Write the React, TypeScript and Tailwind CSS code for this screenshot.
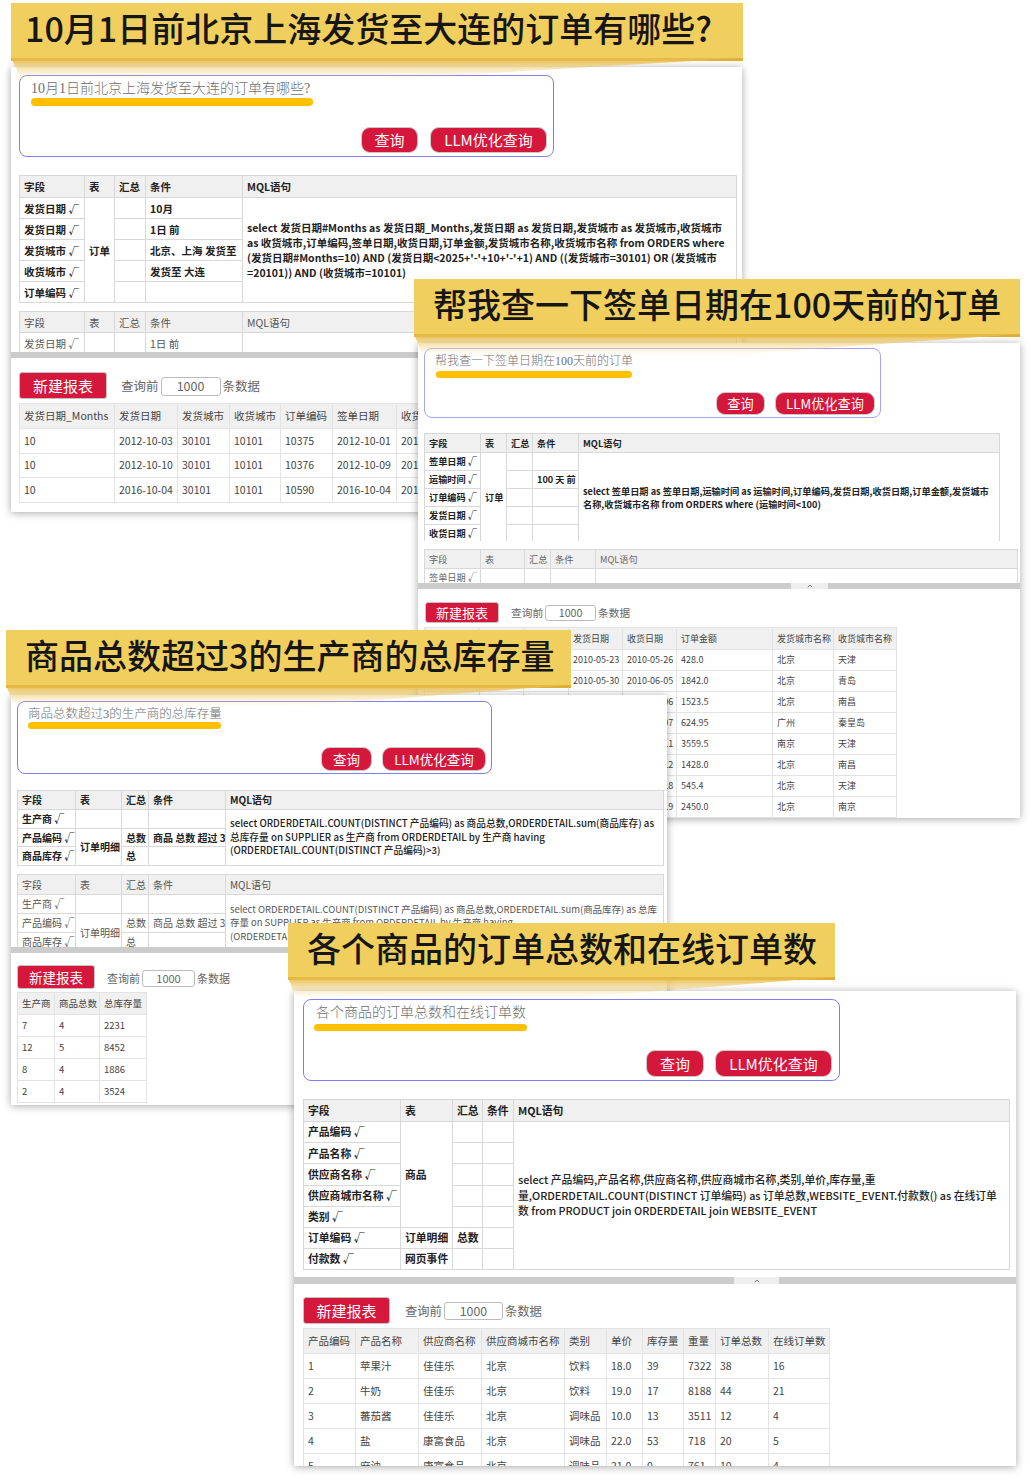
import { useId } from 'react';
import type { ReactNode } from 'react';
import { ChevronUp } from 'lucide-react';

type Cell = string | { t: string; span: number } | null;

interface GridTableProps {
  cols: string[];
  head: string[];
  rows: Cell[][];
  width: string;
  headH: string;
  rowH: string;
  text: string;
  wrapLast?: boolean;
  wrapText?: string;
  margin?: string;
  result?: boolean;
}

// one table, also used for the result grids at the bottom of each window
function GridTable({ cols, head, rows, width, headH, rowH, text, wrapLast, wrapText, margin, result }: GridTableProps) {
  const line = result ? 'border border-[#e3e3e3]' : 'border border-[#d8d8d8]';
  return (
    <table className={`table-fixed border-collapse shrink-0 ${width} ${text} ${margin ?? ''}`}>
      <colgroup>
        {cols.map((c, i) => (
          <col key={i} className={c} />
        ))}
      </colgroup>
      <thead>
        <tr className={`${headH} bg-[#f0f0f0]`}>
          {head.map((h, i) => (
            <th key={i} className={`${line} px-[4px] py-0 text-left [font-weight:inherit] whitespace-nowrap overflow-hidden`}>
              {h}
            </th>
          ))}
        </tr>
      </thead>
      <tbody>
        {rows.map((row, r) => (
          <tr key={r} className={rowH}>
            {row.map((cell, i) => {
              if (cell === null) return null;
              const span = typeof cell === 'string' ? 1 : cell.span;
              const label = typeof cell === 'string' ? cell : cell.t;
              const wrap = wrapLast && i === row.length - 1;
              return (
                <td
                  key={i}
                  rowSpan={span}
                  className={`${line} px-[4px] py-0 overflow-hidden ${wrap ? wrapText ?? '' : 'whitespace-nowrap'}`}
                >
                  {label}
                </td>
              );
            })}
          </tr>
        ))}
      </tbody>
    </table>
  );
}

interface BannerProps {
  box: string;
  children: ReactNode;
}

function Banner({ box, children }: BannerProps) {
  const id = useId();
  return (
    <div className={`absolute ${box} bg-[#f0cf5e] border-b-[3px] border-[#dcae36] flex items-center pb-[5px]`}>
      <span className="text-[34px] leading-none font-medium text-[#161616] whitespace-nowrap">{children}</span>
      <svg className="absolute left-0 top-full w-full h-[24px]" viewBox="0 0 100 24" preserveAspectRatio="none">
        <defs>
          <linearGradient id={id} x1="0" y1="0" x2="0" y2="1">
            <stop offset="0" stopColor="#e6b843" stopOpacity="1" />
            <stop offset="0.9" stopColor="#f6e09a" stopOpacity="0" />
          </linearGradient>
        </defs>
        <polygon points="0,0 1.2,18 45,24 100,0" fill={`url(#${id})`} />
      </svg>
    </div>
  );
}

interface QueryBoxProps {
  box: string;
  label: string;
  labelClass: string;
  bar: string;
  btnRow: string;
  btnA: string;
  btnB: string;
}

function QueryBox({ box, label, labelClass, bar, btnRow, btnA, btnB }: QueryBoxProps) {
  const btn = 'flex items-center justify-center rounded-[9px] bg-[#d5173c] border border-[#c9c9c9] text-white';
  return (
    <div className={`${box} shrink-0 flex flex-col border rounded-[8px] bg-white`}>
      <div className={`${labelClass} font-['Liberation_Serif','Noto_Sans_CJK_SC',serif] font-light text-[#6f6f6f] whitespace-nowrap`}>
        {label}
      </div>
      <div className={`${bar} rounded-full bg-[#ffc000]`} />
      <div className={`mt-auto flex justify-end ${btnRow}`}>
        <div className={`${btn} ${btnA}`}>查询</div>
        <div className={`${btn} ${btnB}`}>LLM优化查询</div>
      </div>
    </div>
  );
}

interface ToolbarProps {
  pad: string;
  btn: string;
  group: string;
  input: string;
}

function Toolbar({ pad, btn, group, input }: ToolbarProps) {
  return (
    <div className={`flex items-start ${pad}`}>
      <div className={`${btn} flex items-center justify-center rounded-[3px] bg-[#d5173c] border border-[#c2c2c2] text-white`}>
        新建报表
      </div>
      <div className={`flex items-center text-[#666] ${group}`}>
        <span>查询前</span>
        <div className={`${input} mx-[2px] flex items-center justify-center bg-white border border-[#bbb] rounded-[3px] text-[#666]`}>
          1000
        </div>
        <span>条数据</span>
      </div>
    </div>
  );
}

function Divider({ height, handle }: { height: string; handle?: string }) {
  return (
    <div className={`${height} shrink-0 bg-[#cccccc] flex`}>
      {handle && (
        <div className={`${handle} h-full bg-[#eeeeee] flex items-center justify-center`}>
          <ChevronUp size={8} strokeWidth={3} className="text-[#777]" />
        </div>
      )}
    </div>
  );
}

const HEAD = ['字段', '表', '汇总', '条件', 'MQL语句'];

const A_COLS = ['w-[65px]', 'w-[30px]', 'w-[31px]', 'w-[97px]', 'w-[494px]'];
const B_COLS = ['w-[56px]', 'w-[26px]', 'w-[26px]', 'w-[46px]', 'w-[421px]'];
const B_COLS2 = ['w-[56px]', 'w-[44px]', 'w-[26px]', 'w-[45px]', 'w-[422px]'];
const C_COLS = ['w-[58px]', 'w-[46px]', 'w-[27px]', 'w-[77px]', 'w-[438px]'];
const D_COLS = ['w-[97px]', 'w-[52px]', 'w-[30px]', 'w-[31px]', 'w-[496px]'];

const C_SQL =
  'select ORDERDETAIL.COUNT(DISTINCT 产品编码) as 商品总数,ORDERDETAIL.sum(商品库存) as 总库存量 on SUPPLIER as 生产商 from ORDERDETAIL by 生产商 having (ORDERDETAIL.COUNT(DISTINCT 产品编码)>3)';

const C_ROWS: Cell[][] = [
  ['生产商 √', { t: '', span: 1 }, '', '', { t: C_SQL, span: 3 }],
  ['产品编码 √', { t: '订单明细', span: 2 }, '总数', '商品 总数 超过 3', null],
  ['商品库存 √', null, '总', '', null],
];

export default function App() {
  return (
    <div className="relative w-[1030px] h-[1477px] overflow-hidden bg-white font-['Noto_Sans_CJK_SC','Noto_Sans',sans-serif]">
      {/* window 1 */}
      <div className="absolute left-[11px] top-[67px] w-[731px] h-[445px] bg-white overflow-hidden shadow-[0_1px_8px_rgba(0,0,0,0.35)]">
        <div className="h-[285px] overflow-hidden pl-[8px] pt-[8px] flex flex-col">
          <QueryBox
            box="w-[535px] h-[82px] border-[#7f7ff5]"
            label="10月1日前北京上海发货至大连的订单有哪些?"
            labelClass="mt-[3px] pl-[11px] h-[19px] text-[14px] leading-[20px]"
            bar="ml-[11px] w-[282px] h-[8px]"
            btnRow="pr-[6px] pb-[3px] gap-[12px]"
            btnA="w-[57px] h-[26px] pt-[1px] text-[15px]"
            btnB="w-[117px] h-[26px] pt-[1px] text-[15px]"
          />
          <GridTable
            cols={A_COLS}
            head={HEAD}
            width="w-[717px]"
            margin="mt-[18px]"
            headH="h-[22px]"
            rowH="h-[21px]"
            text="text-[10.5px] leading-[15px] font-semibold text-[#222]"
            wrapLast
            rows={[
              [
                '发货日期 √',
                { t: '订单', span: 5 },
                '',
                '10月',
                {
                  t: "select 发货日期#Months as 发货日期_Months,发货日期 as 发货日期,发货城市 as 发货城市,收货城市 as 收货城市,订单编码,签单日期,收货日期,订单金额,发货城市名称,收货城市名称 from ORDERS where (发货日期#Months=10) AND (发货日期<2025+'-'+10+'-'+1) AND ((发货城市=30101) OR (发货城市=20101)) AND (收货城市=10101)",
                  span: 5,
                },
              ],
              ['发货日期 √', null, '', '1日 前', null],
              ['发货城市 √', null, '', '北京、上海 发货至', null],
              ['收货城市 √', null, '', '发货至 大连', null],
              ['订单编码 √', null, '', '', null],
            ]}
          />
          <GridTable
            cols={A_COLS}
            head={HEAD}
            width="w-[717px]"
            margin="mt-[8px]"
            headH="h-[21px]"
            rowH="h-[21px]"
            text="text-[10.5px] leading-[15px] text-[#555]"
            rows={[['发货日期 √', '', '', '1日 前', '']]}
          />
        </div>
        <Divider height="h-[6px]" />
        <Toolbar
          pad="pl-[8px] pt-[14px]"
          btn="w-[88px] h-[27px] pt-[1px] text-[15px]"
          group="ml-[14px] mt-[5px] text-[12.5px]"
          input="w-[60px] h-[19px]"
        />
        <div className="pl-[8px] pt-[4px]">
          <GridTable
            result
            cols={['w-[95px]', 'w-[63px]', 'w-[52px]', 'w-[51px]', 'w-[52px]', 'w-[64px]', 'w-[60px]']}
            head={['发货日期_Months', '发货日期', '发货城市', '收货城市', '订单编码', '签单日期', '收货日期']}
            width="w-[437px]"
            headH="h-[25px]"
            rowH="h-[24.5px]"
            text="text-[10.5px] text-[#444]"
            rows={[
              ['10', '2012-10-03', '30101', '10101', '10375', '2012-10-01', '2012-10-11'],
              ['10', '2012-10-10', '30101', '10101', '10376', '2012-10-09', '2012-10-13'],
              ['10', '2016-10-04', '30101', '10101', '10590', '2016-10-04', '2016-10-11'],
            ]}
          />
        </div>
      </div>
      <Banner box="left-[11px] top-[3px] w-[732px] h-[58px] pl-[14px]">10月1日前北京上海发货至大连的订单有哪些?</Banner>

      {/* window 2 */}
      <div className="absolute left-[418px] top-[343px] w-[602px] h-[475px] bg-white overflow-hidden shadow-[0_1px_8px_rgba(0,0,0,0.35)]">
        <div className="h-[240px] overflow-hidden pl-[6px] pt-[5px] flex flex-col">
          <QueryBox
            box="w-[457px] h-[70px] border-[#a5a5f7]"
            label="帮我查一下签单日期在100天前的订单"
            labelClass="mt-[3px] pl-[10px] h-[18px] text-[12px] leading-[18px]"
            bar="mt-[1px] ml-[11px] w-[196px] h-[7px]"
            btnRow="pr-[5px] pb-[2px] gap-[10px]"
            btnA="w-[49px] h-[23px] pt-[1px] text-[13.2px]"
            btnB="w-[100px] h-[23px] pt-[1px] text-[13.2px]"
          />
          <div className="mt-[15px] h-[108px] shrink-0 overflow-hidden">
            <GridTable
              cols={B_COLS}
              head={HEAD}
              width="w-[575px]"
              headH="h-[19px]"
              rowH="h-[18px]"
              text="text-[9.2px] leading-[13px] font-semibold text-[#222]"
              wrapLast
              rows={[
                [
                  '签单日期 √',
                  { t: '订单', span: 5 },
                  '',
                  '',
                  {
                    t: 'select 签单日期 as 签单日期,运输时间 as 运输时间,订单编码,发货日期,收货日期,订单金额,发货城市名称,收货城市名称 from ORDERS where (运输时间<100)',
                    span: 5,
                  },
                ],
                ['运输时间 √', null, '', '100 天 前', null],
                ['订单编码 √', null, '', '', null],
                ['发货日期 √', null, '', '', null],
                ['收货日期 √', null, '', '', null],
              ]}
            />
          </div>
          <GridTable
            cols={B_COLS2}
            head={HEAD}
            width="w-[593px]"
            margin="mt-[8px]"
            headH="h-[19px]"
            rowH="h-[18px]"
            text="text-[9.2px] leading-[13px] text-[#666]"
            rows={[['签单日期 √', '', '', '', '']]}
          />
        </div>
        <Divider height="h-[6px]" handle="ml-[373px] w-[37px]" />
        <Toolbar
          pad="pl-[7px] pt-[13px]"
          btn="w-[74px] h-[21px] text-[13px]"
          group="ml-[12px] mt-[3px] text-[10.7px]"
          input="w-[51px] h-[16px]"
        />
        <div className="pl-[6px] pt-[4px]">
          <GridTable
            result
            cols={['w-[55px]', 'w-[44px]', 'w-[45px]', 'w-[54px]', 'w-[54px]', 'w-[96px]', 'w-[61px]', 'w-[63px]']}
            head={['', '', '', '发货日期', '收货日期', '订单金额', '发货城市名称', '收货城市名称']}
            width="w-[472px]"
            headH="h-[22px]"
            rowH="h-[21px]"
            text="text-[9px] text-[#444]"
            rows={[
              ['', '', '', '2010-05-23', '2010-05-26', '428.0', '北京', '天津'],
              ['', '', '', '2010-05-30', '2010-06-05', '1842.0', '北京', '青岛'],
              ['', '', '', '', '2010-06-06', '1523.5', '北京', '南昌'],
              ['', '', '', '', '2010-06-07', '624.95', '广州', '秦皇岛'],
              ['', '', '', '', '2010-06-11', '3559.5', '南京', '天津'],
              ['', '', '', '', '2010-06-12', '1428.0', '北京', '南昌'],
              ['', '', '', '', '2010-06-18', '545.4', '北京', '天津'],
              ['', '', '', '', '2010-06-19', '2450.0', '北京', '南京'],
            ]}
          />
        </div>
      </div>
      <Banner box="left-[414px] top-[279px] w-[606px] h-[58px] pl-[19px]">帮我查一下签单日期在100天前的订单</Banner>

      {/* window 3 */}
      <div className="absolute left-[11px] top-[695px] w-[656px] h-[410px] bg-white overflow-hidden shadow-[0_1px_8px_rgba(0,0,0,0.35)]">
        <div className="h-[252px] overflow-hidden pl-[6px] pt-[6px] flex flex-col">
          <QueryBox
            box="w-[475px] h-[73px] border-[#7f7ff5]"
            label="商品总数超过3的生产商的总库存量"
            labelClass="mt-[3px] pl-[10px] h-[17px] text-[12.5px] leading-[18px]"
            bar="ml-[10px] w-[193px] h-[7px]"
            btnRow="pr-[5px] pb-[2px] gap-[10px]"
            btnA="w-[51px] h-[24px] text-[13.5px]"
            btnB="w-[104px] h-[24px] text-[13.5px]"
          />
          <GridTable
            cols={C_COLS}
            head={HEAD}
            width="w-[646px]"
            margin="mt-[16px]"
            headH="h-[19px]"
            rowH="h-[18.7px]"
            text="text-[10px] leading-[13.5px] font-semibold text-[#222]"
            wrapLast
            wrapText="font-medium text-[9.7px]"
            rows={C_ROWS}
          />
          <GridTable
            cols={C_COLS}
            head={HEAD}
            width="w-[646px]"
            margin="mt-[8px]"
            headH="h-[20px]"
            rowH="h-[19px]"
            text="text-[10px] leading-[13.5px] text-[#555]"
            wrapLast
            wrapText="text-[9.45px]"
            rows={C_ROWS}
          />
        </div>
        <Divider height="h-[6px]" />
        <Toolbar
          pad="pl-[6px] pt-[12px]"
          btn="w-[78px] h-[24px] text-[13.5px]"
          group="ml-[12px] mt-[5px] text-[11px]"
          input="w-[53px] h-[17px]"
        />
        <div className="pl-[6px] pt-[3px]">
          <GridTable
            result
            cols={['w-[37px]', 'w-[45px]', 'w-[47px]']}
            head={['生产商', '商品总数', '总库存量']}
            width="w-[129px]"
            headH="h-[22px]"
            rowH="h-[22px]"
            text="text-[9.5px] text-[#444]"
            rows={[
              ['7', '4', '2231'],
              ['12', '5', '8452'],
              ['8', '4', '1886'],
              ['2', '4', '3524'],
            ]}
          />
        </div>
      </div>
      <Banner box="left-[6px] top-[630px] w-[565px] h-[58px] pl-[19px]">商品总数超过3的生产商的总库存量</Banner>

      {/* window 4 */}
      <div className="absolute left-[294px] top-[991px] w-[722px] h-[475px] bg-white overflow-hidden shadow-[0_1px_8px_rgba(0,0,0,0.35)]">
        <div className="h-[286px] overflow-hidden pl-[9px] pt-[8px] flex flex-col">
          <QueryBox
            box="w-[537px] h-[82px] border-[#7f7ff5]"
            label="各个商品的订单总数和在线订单数"
            labelClass="mt-[3px] pl-[12px] h-[20px] text-[14px] leading-[20px]"
            bar="mt-[1px] ml-[10px] w-[213px] h-[7px]"
            btnRow="pr-[7px] pb-[3px] gap-[11px]"
            btnA="w-[58px] h-[27px] pt-[2px] text-[15px]"
            btnB="w-[117px] h-[27px] pt-[2px] text-[15px]"
          />
          <GridTable
            cols={D_COLS}
            head={HEAD}
            width="w-[706px]"
            margin="mt-[18px]"
            headH="h-[22px]"
            rowH="h-[21.2px]"
            text="text-[10.8px] leading-[15.5px] font-semibold text-[#222]"
            wrapLast
            wrapText="font-medium"
            rows={[
              [
                '产品编码 √',
                { t: '商品', span: 5 },
                '',
                '',
                {
                  t: 'select 产品编码,产品名称,供应商名称,供应商城市名称,类别,单价,库存量,重量,ORDERDETAIL.COUNT(DISTINCT 订单编码) as 订单总数,WEBSITE_EVENT.付款数() as 在线订单数 from PRODUCT join ORDERDETAIL join WEBSITE_EVENT',
                  span: 7,
                },
              ],
              ['产品名称 √', null, '', '', null],
              ['供应商名称 √', null, '', '', null],
              ['供应商城市名称 √', null, '', '', null],
              ['类别 √', null, '', '', null],
              ['订单编码 √', '订单明细', '总数', '', null],
              ['付款数 √', '网页事件', '', '', null],
            ]}
          />
        </div>
        <Divider height="h-[7px]" handle="ml-[440px] w-[45px]" />
        <Toolbar
          pad="pl-[9px] pt-[13px]"
          btn="w-[87px] h-[27px] pt-[2px] text-[15px]"
          group="ml-[15px] mt-[5px] text-[12.3px]"
          input="w-[59px] h-[18px]"
        />
        <div className="pl-[9px] pt-[4px]">
          <GridTable
            result
            cols={['w-[52px]', 'w-[63px]', 'w-[63px]', 'w-[83px]', 'w-[42px]', 'w-[36px]', 'w-[41px]', 'w-[32px]', 'w-[53px]', 'w-[61px]']}
            head={['产品编码', '产品名称', '供应商名称', '供应商城市名称', '类别', '单价', '库存量', '重量', '订单总数', '在线订单数']}
            width="w-[526px]"
            headH="h-[25px]"
            rowH="h-[25px]"
            text="text-[10.5px] text-[#444]"
            rows={[
              ['1', '苹果汁', '佳佳乐', '北京', '饮料', '18.0', '39', '7322', '38', '16'],
              ['2', '牛奶', '佳佳乐', '北京', '饮料', '19.0', '17', '8188', '44', '21'],
              ['3', '蕃茄酱', '佳佳乐', '北京', '调味品', '10.0', '13', '3511', '12', '4'],
              ['4', '盐', '康富食品', '北京', '调味品', '22.0', '53', '718', '20', '5'],
              ['5', '麻油', '康富食品', '北京', '调味品', '21.0', '0', '761', '10', '4'],
            ]}
          />
        </div>
      </div>
      <Banner box="left-[288px] top-[923px] w-[547px] h-[57px] pl-[19px]">各个商品的订单总数和在线订单数</Banner>
    </div>
  );
}
